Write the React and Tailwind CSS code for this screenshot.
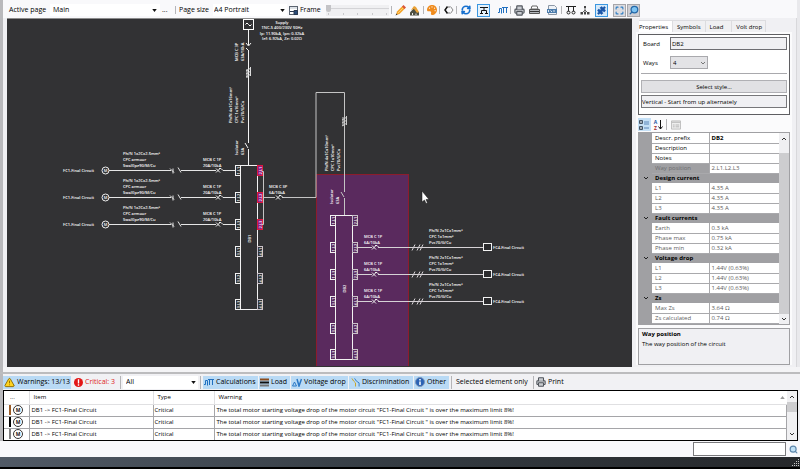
import { useState } from "react";
import clsx from "clsx";
import { RefreshCw, Printer, Search, Puzzle, Maximize, TriangleAlert } from "lucide-react";
import { FaPalette } from "react-icons/fa";

const WARNING_TEXT =
  "The total motor starting voltage drop of the motor circuit \"FC1-Final Circuit \" is over the maximum limit 8%!";

const warnings = [
  { id: 1, color: "bg-[#9a5b26]" },
  { id: 2, color: "bg-black" },
  { id: 3, color: "bg-[#808080]" },
];

const properties = [
  { label: "Descr. prefix", value: "DB2", kind: "strong" },
  { label: "Description", value: "", kind: "normal" },
  { label: "Notes", value: "", kind: "normal" },
  { label: "Way position", value: "2.L1.L2.L3", kind: "selected" },
  { label: "Design current", kind: "group" },
  { label: "L1", value: "4.35 A", kind: "readonly" },
  { label: "L2", value: "4.35 A", kind: "readonly" },
  { label: "L3", value: "4.35 A", kind: "readonly" },
  { label: "Fault currents", kind: "group" },
  { label: "Earth", value: "0.3 kA", kind: "readonly" },
  { label: "Phase max", value: "0.75 kA", kind: "readonly" },
  { label: "Phase min", value: "0.32 kA", kind: "readonly" },
  { label: "Voltage drop", kind: "group" },
  { label: "L1", value: "1.44V (0.63%)", kind: "readonly" },
  { label: "L2", value: "1.44V (0.63%)", kind: "readonly" },
  { label: "L3", value: "1.44V (0.63%)", kind: "readonly" },
  { label: "Zs", kind: "group" },
  { label: "Max Zs", value: "3.64 Ω", kind: "readonly" },
  { label: "Zs calculated", value: "0.74 Ω", kind: "readonly" },
];

export default function App() {
  return (
    <div className="flex min-h-screen flex-col bg-[#f0f0f3] font-['Open_Sans','Noto_Sans',sans-serif] text-[7px] leading-[10px] whitespace-nowrap text-black">
      <div className="flex flex-1 border-x-[3px] border-l-[#b9b9bc] border-r-[#e9e9ec]">
        <div className="flex min-w-0 flex-1 flex-col">
          <MainToolbar />
          <div className="flex min-h-0 flex-1">
            <div className="ml-1 min-w-0 flex-1 border-t border-[#8c8c8c] bg-[#323234]">
              <Diagram />
            </div>
            <SidePanel />
          </div>
        </div>
      </div>
      <div className="h-[5px] border-l-[3px] border-[#b9b9bc] bg-[#f4f4f6]" />
      <div className="h-[2px] bg-[#bcbcbe]" />
      <WarningsToolbar />
      <WarningsTable />
      <StatusBar />
    </div>
  );
}

/* ── Toolbar ── */

function Separator({ className }) {
  return <span className={clsx("w-px shrink-0 bg-[#b5b5b8]", className)} />;
}

function DropArrow({ className }) {
  return (
    <svg viewBox="0 0 6 4" className={clsx("pointer-events-none absolute h-[3px] w-[5px]", className)}>
      <path d="M0 0h6L3 4z" fill="#111" />
    </svg>
  );
}

function ToolButton({ label, className, children }) {
  return (
    <button
      type="button"
      aria-label={label}
      className={clsx("flex h-[13px] w-[13px] shrink-0 items-center justify-center", className)}
    >
      {children}
    </button>
  );
}

function MainToolbar() {
  const [frame, setFrame] = useState(0);

  return (
    <div className="flex h-[18px] items-center bg-[#f9f9fb] pt-[2px] pl-[6px]">
      <label htmlFor="page" className="w-[41px] shrink-0">Active page</label>
      <div className="relative flex w-[110px] shrink-0 items-center bg-white">
        <select id="page" className="h-3 w-full appearance-none bg-transparent pl-[3px]">
          <option>Main</option>
        </select>
        <DropArrow className="right-[3px]" />
      </div>
      <button type="button" className="ml-[2px] w-3 shrink-0 text-left">...</button>
      <Separator className="ml-[1px] h-2" />
      <label htmlFor="size" className="ml-[3px] w-[34px] shrink-0">Page size</label>
      <div className="relative flex w-[74px] shrink-0 items-center bg-white">
        <select id="size" className="h-3 w-full appearance-none bg-transparent pl-[1px]">
          <option>A4 Portrait</option>
        </select>
        <DropArrow className="right-[2px]" />
      </div>
      <button type="button" className="ml-[2px] flex w-[32px] shrink-0 items-center gap-[2px]">
        <svg viewBox="0 0 9 9" className="h-[9px] w-[9px]">
          <rect x="0.5" y="0.5" width="8" height="8" fill="#fff" stroke="#5b6470" />
          <path d="M1 5.5h4M5 4.5h3.5v4H5z" fill="#2a4b78" stroke="#2a3a52" />
          <path d="M1 2h7" stroke="#b9c3ce" />
        </svg>
        Frame
      </button>
      <Slider value={frame} onChange={setFrame} />
      <Separator className="ml-[2px] h-2" />
      <ToolButton label="Edit" className="ml-[2px]">
        <svg viewBox="0 0 11 11" className="h-[11px] w-[11px]">
          <path d="M1 10l1-3.500L7.500 1 10 3.500 4.500 9z" fill="#f5a52c" />
          <path d="M3 8L8.500 2.500" stroke="#ffd070" />
          <path d="M7 1.500L8.500 0 11 2.500 9.500 4z" fill="#d9553b" />
          <path d="M0.500 10.500l1-2 1 1z" fill="#333" />
        </svg>
      </ToolButton>
      <ToolButton label="Edit board" className="ml-[1px]">
        <svg viewBox="0 0 11 11" className="h-[11px] w-[11px]">
          <path d="M1 10.500v-3L5 3l5 4.500v3z" fill="#4d4f42" />
          <path d="M2 5l3-4 2 1 3 5-2 1-3-4z" fill="#e9a136" />
          <path d="M3.500 10V8M7 10V8.500" stroke="#e8e8e8" />
        </svg>
      </ToolButton>
      <Separator className="ml-[2px] h-2" />
      <ToolButton label="Colours" className="ml-[1px]">
        <FaPalette className="h-[10px] w-[10px] -scale-x-100 text-[#f08c1e]" />
      </ToolButton>
      <Separator className="ml-[1px] h-2" />
      <ToolButton label="Mirror" className="ml-[2px]">
        <svg viewBox="0 0 10 10" className="h-[10px] w-[10px]">
          <path d="M3.500 1.500L1 5l2.500 3.500" fill="none" stroke="#111" strokeWidth="1.5" />
          <path d="M5 1v2M5 7v2" stroke="#777" />
          <path d="M6.500 1.500L9 5 6.500 8.500" fill="none" stroke="#888" />
        </svg>
      </ToolButton>
      <Separator className="ml-[1px] h-2" />
      <ToolButton label="Refresh" className="ml-[2px]">
        <RefreshCw className="h-[10px] w-[10px] text-[#1670cf]" strokeWidth={4} />
      </ToolButton>
      <ToolButton label="Tree view" className="ml-[5px] border border-[#3b97e0] bg-[#e6f2fb]">
        <svg viewBox="0 0 10 10" className="h-[10px] w-[10px]">
          <path d="M1 2.500h8M5 3v3M2.500 9V5.500h5V9M1 8.500h3M6 8.500h3" fill="none" stroke="#111" />
        </svg>
      </ToolButton>
      <ToolButton label="Calculations" className="ml-[6px]">
        <WaveIcon />
      </ToolButton>
      <Separator className="ml-[1px] h-2" />
      <ToolButton label="Print" className="ml-[2px]">
        <Printer className="h-[11px] w-[11px] fill-[#c9ccd1] text-[#50555c]" strokeWidth={2.5} />
      </ToolButton>
      <ToolButton label="Print all" className="ml-[2px]">
        <svg viewBox="0 0 11 10" className="h-[10px] w-[11px]">
          <path d="M3 1h5l1 3H2z" fill="#fff" stroke="#666" />
          <path d="M0.500 4.500h10v4h-10z" fill="#b5b8bd" stroke="#555" />
          <path d="M1 6.500h9" stroke="#333" />
        </svg>
      </ToolButton>
      <ToolButton label="Export DXF" className="ml-[5px]">
        <svg viewBox="0 0 11 10" className="h-[10px] w-[11px]">
          <path d="M1.500 0.500h6l2 2v7h-8z" fill="#eef2f7" stroke="#8d98a6" />
          <path d="M0 4h10v4H0z" fill="#4d7dac" />
          <path d="M1.500 5v2M3.500 5.500l1.500 1.500M7 5v2" stroke="#dfe9f4" />
        </svg>
      </ToolButton>
      <Separator className="ml-[2px] h-2" />
      <ToolButton label="Circuits" className="ml-[2px]">
        <svg viewBox="0 0 10 10" className="h-[10px] w-[10px]">
          <path d="M0 1.500h10M2.500 1.500v5M7.500 1.500v5" stroke="#222" />
          <circle cx="2.5" cy="7.5" r="1.5" fill="none" stroke="#222" />
          <circle cx="7.5" cy="7.5" r="1.5" fill="none" stroke="#222" />
        </svg>
      </ToolButton>
      <ToolButton label="Hierarchy" className="ml-[1px]">
        <svg viewBox="0 0 10 10" className="h-[10px] w-[10px]">
          <path d="M5 2v3L2 8M5 5l3 3M5 5v3" fill="none" stroke="#666" />
          <path d="M4 1h2v2H4zM0.500 7h2.500v2.500H0.500zM4 7h2v2.500H4zM7 7h2.500v2.500H7z" fill="#444" />
        </svg>
      </ToolButton>
      <ToolButton label="Plugins" className="ml-[4px] border border-[#3b97e0] bg-[#d6eafa]">
        <Puzzle className="h-[9px] w-[9px] fill-[#1b56a8] text-[#1b56a8]" strokeWidth={2} />
      </ToolButton>
      <ToolButton label="Fit to window" className="ml-[5px] border border-[#a6a6aa] bg-[#dcdce0]">
        <Maximize className="h-[9px] w-[9px] text-[#2f7fc4]" strokeWidth={3} />
      </ToolButton>
      <ToolButton label="Zoom" className="ml-[1px] border border-[#a6a6aa] bg-[#cfcfd4]">
        <Search className="h-[10px] w-[10px] -scale-x-100 fill-[#7dc3f2] text-[#2569a8]" strokeWidth={3} />
      </ToolButton>
    </div>
  );
}

function Slider({ value, onChange }) {
  return (
    <div className="ml-[5px] w-[63px] shrink-0 bg-[#f0f0f2]">
      <input
        type="range"
        aria-label="Zoom level"
        min="0"
        max="100"
        value={value}
        onChange={(e) => onChange(Number(e.target.value))}
        className="block h-[8px] w-full appearance-none bg-[linear-gradient(#d4d4d7,#d4d4d7)] bg-[length:100%_1px] bg-center bg-no-repeat [&::-webkit-slider-thumb]:h-[7px] [&::-webkit-slider-thumb]:w-[5px] [&::-webkit-slider-thumb]:appearance-none [&::-webkit-slider-thumb]:rounded-b-sm [&::-webkit-slider-thumb]:bg-[#c4c4c7]"
      />
      <div className="flex h-[3px] justify-between px-[2px]">
        {[0, 1, 2, 3, 4].map((tick) => (
          <span key={tick} className="h-[2px] w-px bg-[#c9c9cc]" />
        ))}
      </div>
    </div>
  );
}

function WaveIcon() {
  return (
    <svg viewBox="0 0 10 9" className="h-[9px] w-[10px]">
      <path d="M0 6.500h1.500v-4h2v5M4 1.500h6M5.500 2v5M8.500 2v5" fill="none" stroke="#1f6fc0" />
    </svg>
  );
}

/* ── Diagram ── */

function Label({ x, y, children, anchor = "start", vertical = false }) {
  return (
    <text
      x={x}
      y={y}
      textAnchor={anchor}
      transform={vertical ? `rotate(-90 ${x} ${y})` : undefined}
    >
      {children}
    </text>
  );
}

function CableLabels({ x, y, lines, vertical = false }) {
  return lines.map((line, i) => (
    <Label key={line} x={vertical ? x + i * 6 : x} y={vertical ? y : y + i * 6} vertical={vertical}>
      {line}
    </Label>
  ));
}

function Breaker({ x, y }) {
  return (
    <path
      d={`M${x} ${y - 2}l4 4M${x + 4} ${y - 2}l-4 4M${x + 3} ${y - 2}h2l2 2`}
      fill="none"
      stroke="#eee"
    />
  );
}

function Board({ x, y, name, ways, active = [] }) {
  return (
    <g>
      <path d={`M${x} ${y}h17v144h-17z`} fill="none" stroke="#f2f2f2" />
      {ways.map((wayY, i) => {
        const on = active.includes(i);
        return (
          <g key={wayY}>
            <rect x={x - 5} y={wayY - 5} width="5" height="10" fill="none" stroke="#f2f2f2" />
            <rect
              x={x + 17}
              y={wayY - 5}
              width="5"
              height="10"
              fill={on ? "#8f1c86" : "none"}
              stroke={on ? "#e0193f" : "#c9c2c9"}
            />
            <Label x={x - 1} y={wayY + 4} vertical>{`${i < 3 ? 1 : 3}.L${(i % 3) + 1}`}</Label>
            <Label x={x + 21} y={wayY + 4} vertical>{`${i < 3 ? 2 : 4}.L${(i % 3) + 1}`}</Label>
          </g>
        );
      })}
      <Label x={x + 10} y={y + 77} vertical>{name}</Label>
    </g>
  );
}

function MotorCircuit({ y }) {
  return (
    <g>
      <Label x="63" y={y + 1}>FC1-Final Circuit</Label>
      <circle cx="105.5" cy={y} r="3.5" fill="none" stroke="#eee" />
      <Label x="105.5" y={y + 1} anchor="middle">M</Label>
      <path
        d={`M109 ${y}h62M181 ${y}h35M223 ${y}h12M170 ${y - 2}l4 4M173 ${y - 2}v5M178 ${y - 3}l3 5`}
        fill="none"
        stroke="#e6e6e6"
      />
      <CableLabels x={123} y={y - 16} lines={["Ph/N 1x2Cx2.5mm²", "CPC  armour", "SwaXlpe90/M/Cu"]} />
      <Label x="203" y={y - 10}>MCB C 1P</Label>
      <Label x="203" y={y - 4}>20A/10kA</Label>
      <Breaker x={216} y={y} />
    </g>
  );
}

function OutgoingCircuit({ y }) {
  return (
    <g>
      <path
        d={`M358 ${y}h14M378 ${y}h105M412 ${y + 3}l3 -6M417 ${y + 3}l3 -6M420 ${y + 3}l3 -6`}
        fill="none"
        stroke="#d6d2d6"
      />
      <Breaker x={372} y={y} />
      <Label x="364" y={y - 10}>MCB C 1P</Label>
      <Label x="364" y={y - 4}>6A/10kA</Label>
      <CableLabels x={429} y={y - 16} lines={["Ph/N 2x1Cx1mm²", "CPC  1x1mm²", "Pvc70/G/Cu"]} />
      <rect x="483.5" y={y - 4} width="8" height="7" fill="#2b2b2d" stroke="#f2f2f2" />
      <Label x="493" y={y + 1}>FC4-Final Circuit</Label>
    </g>
  );
}

function Diagram() {
  return (
    <svg
      viewBox="7 19 625 347"
      preserveAspectRatio="xMinYMin meet"
      className="block w-full fill-white text-[4px] font-semibold"
    >
      {/* selected board */}
      <rect x="316.5" y="174.5" width="92" height="200" fill="#5a2a5e" stroke="#8c1d2c" />

      {/* supply */}
      <rect x="243.5" y="19.5" width="10" height="10" fill="none" stroke="#fff" />
      <path d="M245.500 24.500q1.500-3 3 0t3 0" fill="none" stroke="#fff" />
      <Label x="282" y="24" anchor="middle">Supply</Label>
      <Label x="282" y="29" anchor="middle">TNC-S 400/230V 50Hz</Label>
      <Label x="282" y="35" anchor="middle">Ip: 11.90kA, Ipn: 0.32kA</Label>
      <Label x="282" y="40" anchor="middle">Ief: 6.92kA, Ze: 0.02Ω</Label>
      <path
        d="M248.500 30v15M248.500 50v93M248.500 149v17M246 43l2.500 3M251 43l-2.500 3M246 48l3 3M245 143l3 5"
        fill="none"
        stroke="#f4f4f4"
      />
      <path d="M246 71l5 -3M246 74l5 -3M246 77l5 -3M247 69v9M250.500 67v9" fill="none" stroke="#ddd" />
      <Label x="238" y="61" vertical>MCB C 3P</Label>
      <Label x="244" y="61" vertical>63A/10kA</Label>
      <CableLabels x={232} y={123} vertical lines={["Ph/N 4x1Cx16mm²", "CPC  1x16mm²", "Pvc70/G/Cu"]} />
      <Label x="238" y="155" vertical>Isolator</Label>
      <Label x="244" y="155" vertical>63A</Label>

      {/* DB1 */}
      <Board x={240.5} y={165.5} name="DB1" ways={[170.5, 197.5, 224.5, 251.5, 278.5, 304.5]} active={[0, 1, 2]} />
      <MotorCircuit y={170.5} />
      <MotorCircuit y={197.5} />
      <MotorCircuit y={224.5} />

      {/* DB1 to DB2 feed */}
      <path
        d="M262 171.500h1.500v53H262M263 197.500h12M282 197.500h34V92.500h28.500V192M344.500 198v17M341 192l3 5"
        fill="none"
        stroke="#c4c4c4"
      />
      <Breaker x={276} y={197.5} />
      <Label x="269" y="188">MCB C 3P</Label>
      <Label x="269" y="194">6A/10kA</Label>
      <path d="M342 120l5 -3M342 123l5 -3M342 126l5 -3M343 117v9M346.500 116v9" fill="none" stroke="#ccc" />
      <CableLabels x={328} y={171} vertical lines={["Ph/N 4x1Cx10mm²", "CPC  1x10mm²", "Pvc70/G/Cu"]} />
      <Label x="333" y="204" vertical>Isolator</Label>
      <Label x="339" y="204" vertical>63A</Label>

      {/* DB2 */}
      <Board x={335.5} y={215.5} name="DB2" ways={[220.5, 247.5, 274.5, 301.5, 328.5, 354.5]} />
      <OutgoingCircuit y={247.5} />
      <OutgoingCircuit y={274.5} />
      <OutgoingCircuit y={301.5} />

      <path
        d="M422 191v11l2.500 -2 1.500 3.500 1.500 -0.500 -1.500 -3.500h3z"
        fill="#fff"
        stroke="#111"
        strokeWidth="0.5"
      />
    </svg>
  );
}

/* ── Side panel ── */

const tabs = [
  { name: "Properties", className: "pr-[4px]" },
  { name: "Symbols", className: "px-[4px]" },
  { name: "Load", className: "pr-[8px] pl-[4px]" },
  { name: "Volt drop", className: "pr-[3px] pl-[4px]" },
];

function SidePanel() {
  const [active, setActive] = useState("Properties");

  return (
    <div className="flex w-[165px] shrink-0 flex-col border-r border-[#d8d8db] pt-[2px] pr-[4px] pb-[2px] pl-[4px] text-[6px]">
      <div role="tablist" className="flex pl-[3px]">
        {tabs.map((tab) => (
          <button
            key={tab.name}
            type="button"
            role="tab"
            aria-selected={tab.name === active}
            onClick={() => setActive(tab.name)}
            className={clsx(
              "h-3 border-t border-r border-[#dcdcdf]",
              tab.name === active ? "bg-white" : "bg-[#f0f0f2]",
              tab.className
            )}
          >
            {tab.name}
          </button>
        ))}
      </div>
      <div className="flex flex-1 flex-col bg-[#fbfbfc] px-[2px] pt-[2px]">
        <div className="border border-[#5f5f62] bg-white p-[2px]">
          <div className="flex items-center">
            <label htmlFor="board" className="w-[29px] pl-[2px]">Board</label>
            <input
              id="board"
              defaultValue="DB2"
              className="h-[13px] min-w-0 flex-1 border border-[#6e6e72] bg-[#f0f0f3] px-[1px]"
            />
          </div>
          <div className="mt-[6px] flex items-center">
            <label htmlFor="ways" className="w-[29px] pl-[2px]">Ways</label>
            <div className="relative flex w-[38px] items-center">
              <select
                id="ways"
                className="h-[13px] w-full appearance-none border border-[#a9a9ad] bg-[#e3e3e6] pl-[2px]"
              >
                <option>4</option>
              </select>
              <Chevron className="pointer-events-none absolute right-[2px] text-[#777]" />
            </div>
          </div>
          <hr className="mt-[4px] border-[#a9a9ad]" />
          <button
            type="button"
            className="mt-[6px] block h-[13px] w-full border border-[#b0b0b4] bg-[#e1e1e4]"
          >
            Select style...
          </button>
          <input
            aria-label="Style"
            defaultValue="Vertical - Start from up alternately"
            className="mt-[2px] block h-[13px] w-full border border-[#77777a] bg-[#f0f0f3]"
          />
          <div className="h-[4px]" />
        </div>

        <div className="flex h-[17px] items-end gap-[1px] pb-[1px]">
          <ToolButton label="Categorized" className="bg-[#c5e0f6]">
            <svg viewBox="0 0 11 10" className="h-[10px] w-[11px]">
              <path d="M0.500 0.500h3v3h-3zM0.500 6.500h3v3h-3zM1 2h2M1 8h2" fill="#fff" stroke="#456" />
              <path d="M5 2h5M5 4h5M5 8h5" stroke="#5a86b8" />
            </svg>
          </ToolButton>
          <ToolButton label="Alphabetical">
            <span className="flex flex-col text-[5px] leading-[6px] font-bold">
              <span className="h-[6px] text-[#1c55a0]">A</span>
              <span className="h-[6px] text-[#a02a2a]">Z</span>
            </span>
            <svg viewBox="0 0 5 11" className="ml-[1px] h-[11px] w-[5px]">
              <path d="M2.500 1v9M0.500 7.500l2 2.500 2-2.500" fill="none" stroke="#111" />
            </svg>
          </ToolButton>
          <Separator className="mb-[1px] h-[11px]" />
          <ToolButton label="Property pages" className="ml-[1px]">
            <svg viewBox="0 0 11 10" className="h-[10px] w-[10px]">
              <path d="M0.500 0.500h10v9h-10z" fill="#eee" stroke="#bbb" />
              <path d="M1 2h9M2 5h2M5 5h4M2 7h2M5 7h4" stroke="#b0b0b0" />
            </svg>
          </ToolButton>
        </div>

        <PropertyGrid />

        <div className="mt-[3px] flex-1 border border-[#a0a0a3] bg-[#f0f0f3] px-[3px]">
          <p className="font-bold">Way position</p>
          <p>The way position of the circuit</p>
        </div>
      </div>
    </div>
  );
}

function Chevron({ className, up = false }) {
  return (
    <svg viewBox="0 0 6 4" className={clsx("h-[4px] w-[6px]", className)}>
      <path d={up ? "M1 3l2-2 2 2" : "M1 1l2 2 2-2"} fill="none" stroke="currentColor" />
    </svg>
  );
}

function PropertyGrid() {
  return (
    <div className="flex border border-[#a0a0a3] bg-[#a0a0a3]">
      <table className="flex-1 table-fixed border-collapse leading-[8px]">
        <colgroup>
          <col className="w-[13px]" />
          <col className="w-[57px]" />
          <col />
        </colgroup>
        <tbody>
          {properties.map((row, i) =>
            row.kind === "group" ? (
              <tr key={i} className="h-[10px]">
                <td className="p-0">
                  <Chevron className="mx-auto text-[#222]" />
                </td>
                <th colSpan="2" className="p-0 pl-[3px] text-left font-bold">{row.label}</th>
              </tr>
            ) : (
              <tr key={i} className="h-[10px]">
                <td className="p-0" />
                <th
                  className={clsx(
                    "overflow-hidden border-b border-[#a9a9ac] p-0 pl-[3px] text-left font-normal",
                    row.kind === "selected" ? "bg-[#a0a0a3] text-[#6d6d70]" : "bg-white",
                    row.kind === "readonly" && "text-[#5d5d60]"
                  )}
                >
                  {row.label}
                </th>
                <td
                  className={clsx(
                    "border-b border-l border-[#a9a9ac] bg-white p-0 pl-[2px]",
                    row.kind === "strong" ? "font-bold" : "text-[#5d5d60]"
                  )}
                >
                  {row.value}
                </td>
              </tr>
            )
          )}
        </tbody>
      </table>
      <div className="flex w-[10px] flex-col items-center justify-between bg-[#cdcdcf]">
        <div className="flex h-[20px] w-full justify-center bg-[#f0f0f2] pt-[4px]">
          <Chevron up className="text-[#333]" />
        </div>
        <div className="flex h-[10px] w-full items-center justify-center bg-[#f0f0f2]">
          <Chevron className="text-[#333]" />
        </div>
      </div>
    </div>
  );
}

/* ── Warnings ── */

function FilterButton({ className, children }) {
  return (
    <button type="button" className={clsx("flex h-[13px] shrink-0 items-center gap-[2px]", className)}>
      {children}
    </button>
  );
}

function WarningsToolbar() {
  return (
    <div className="flex h-4 items-center border-l-[3px] border-[#b9b9bc] bg-[#f1f1f4]">
      <FilterButton className="w-[68px] bg-[#b9daf5] pl-[1px]">
        <TriangleAlert className="h-[11px] w-[11px] fill-[#ffd21f] text-[#8a6a00]" strokeWidth={2} />
        Warnings: 13/13
      </FilterButton>
      <FilterButton className="ml-[3px] w-[44px] text-[#e01b1b]">
        <svg viewBox="0 0 10 10" className="h-[9px] w-[9px]">
          <circle cx="5" cy="5" r="5" fill="#e31616" />
          <path d="M5 1.500v4.500M5 7v1.500" stroke="#fff" strokeWidth="1.5" />
        </svg>
        Critical: 3
      </FilterButton>
      <Separator className="ml-[2px] h-[13px]" />
      <div className="relative ml-[2px] flex w-[75px] shrink-0 items-center bg-white">
        <select aria-label="Board filter" className="h-[13px] w-full appearance-none bg-transparent pl-[3px]">
          <option>All</option>
        </select>
        <DropArrow className="right-[2px]" />
      </div>
      <Separator className="mr-[2px] ml-[2px] h-[13px]" />
      <FilterButton className="w-[55px] bg-[#b9daf5] pl-[1px]">
        <WaveIcon />
        Calculations
      </FilterButton>
      <FilterButton className="ml-px w-[31px] bg-[#b9daf5] pl-px">
        <svg viewBox="0 0 9 9" className="h-[9px] w-[9px]">
          <path d="M0 1.500h9" stroke="#8a4b1c" strokeWidth="2" />
          <path d="M0 4.500h9" stroke="#111" strokeWidth="2" />
          <path d="M0 7.500h9" stroke="#777" strokeWidth="2" />
        </svg>
        Load
      </FilterButton>
      <FilterButton className="ml-px w-[57px] bg-[#b9daf5] pl-[1px]">
        <svg viewBox="0 0 10 9" className="h-[9px] w-[10px]">
          <path d="M0.500 8L2.500 4l2 4z" fill="none" stroke="#2b78c6" />
          <path d="M5 1l2 7 2.500-7" fill="none" stroke="#2b78c6" strokeWidth="1.5" />
        </svg>
        Voltage drop
      </FilterButton>
      <FilterButton className="ml-px w-[64px] bg-[#b9daf5] pl-[2px]">
        <svg viewBox="0 0 10 10" className="h-[10px] w-[9px]">
          <path d="M1 1l2 3 2 2v4" fill="none" stroke="#c8a21b" />
          <path d="M4 1l2 3 3 2v4" fill="none" stroke="#2b78c6" />
        </svg>
        Discrimination
      </FilterButton>
      <FilterButton className="ml-px w-[35px] bg-[#b9daf5] pl-[1px]">
        <svg viewBox="0 0 10 10" className="h-[10px] w-[10px]">
          <circle cx="5" cy="5" r="4.5" fill="#2a62b5" stroke="#7f97b8" />
          <path d="M5 2v1.500M5 4.500V8" stroke="#fff" strokeWidth="1.5" />
        </svg>
        Other
      </FilterButton>
      <Separator className="ml-[2px] h-[13px]" />
      <FilterButton className="ml-[4px] w-[77px]">Selected element only</FilterButton>
      <Separator className="h-[13px]" />
      <FilterButton className="ml-[2px]">
        <Printer className="h-[10px] w-[10px] fill-[#c9ccd1] text-[#50555c]" strokeWidth={2.5} />
        Print
      </FilterButton>
    </div>
  );
}

function WarningsTable() {
  return (
    <div className="mr-[2px] flex border-l-[3px] border-[#b9b9bc]">
      <div className="flex min-w-0 flex-1 border border-black bg-white">
        <table className="min-w-0 flex-1 table-fixed border-collapse text-[6px]">
          <colgroup>
            <col className="w-[25px]" />
            <col className="w-[124px]" />
            <col className="w-[61px]" />
            <col />
          </colgroup>
          <thead>
            <tr className="h-[13px] text-left">
              <th className="border-r border-b border-[#e0e0e2] p-0 pl-[6px] font-normal">...</th>
              <th className="border-r border-b border-[#e0e0e2] p-0 pl-[4px] font-normal">Item</th>
              <th className="border-r border-b border-[#e0e0e2] p-0 pl-[4px] font-normal">Type</th>
              <th className="border-b border-[#e0e0e2] p-0 pl-[4px] font-normal">
                <span className="flex items-center justify-between pr-[2px]">
                  Warning
                  <svg viewBox="0 0 6 4" className="h-[3px] w-[5px]">
                    <path d="M0 4h6L3 0z" fill="#999" />
                  </svg>
                </span>
              </th>
            </tr>
          </thead>
          <tbody>
            {warnings.map((row) => (
              <tr key={row.id} className="h-3 border-b border-[#a5a5a8] last:border-b-0">
                <td className="border-r border-[#a5a5a8] p-0">
                  <span className="flex items-center gap-[2px] pl-[5px]">
                    <span className={clsx("h-[10px] w-[2px]", row.color)} />
                    <svg viewBox="0 0 10 10" className="h-[10px] w-[10px]">
                      <circle cx="5" cy="5" r="4.5" fill="#fff" stroke="#333" />
                      <text x="5" y="7" textAnchor="middle" className="fill-[#111] text-[5px] font-bold">M</text>
                    </svg>
                  </span>
                </td>
                <td className="border-r border-[#a5a5a8] p-0 pl-[2px]">DB1 -&gt; FC1-Final Circuit</td>
                <td className="border-r border-[#a5a5a8] p-0 pl-[1px]">Critical</td>
                <td className="border-r border-[#a5a5a8] p-0 pl-[2px]">{WARNING_TEXT}</td>
              </tr>
            ))}
          </tbody>
        </table>
        <div className="flex w-[10px] shrink-0 flex-col items-center bg-[#f0f0f2] py-[4px]">
          <Chevron up className="text-[#333]" />
          <span className="mt-[3px] h-[10px] w-full bg-[#cdcdcf]" />
          <Chevron className="mt-auto text-[#333]" />
        </div>
      </div>
    </div>
  );
}

function StatusBar() {
  return (
    <>
      <div className="flex h-4 items-center justify-end bg-[#f8f8fb] pr-[2px]">
        <input
          aria-label="Search"
          className="h-[14px] w-[93px] border border-[#7a7a7d] bg-white px-1"
        />
        <button type="button" aria-label="Search" className="ml-[3px]">
          <Search className="h-[9px] w-[9px] fill-[#bfe0f5] text-[#5d86ab]" strokeWidth={3} />
        </button>
      </div>
      <div className="flex h-[12px] items-end justify-end border-b-2 border-black bg-linear-to-r from-[#515a66] via-[#343b42] to-[#26282b]">
        <svg viewBox="0 0 8 8" className="h-[8px] w-[8px] fill-[#c9c9c9]">
          <path d="M6 0h1v1H6zM4 2h1v1H4zM6 2h1v1H6zM2 4h1v1H2zM4 4h1v1H4zM6 4h1v1H6zM0 6h1v1H0zM2 6h1v1H2zM4 6h1v1H4zM6 6h1v1H6z" />
        </svg>
      </div>
    </>
  );
}
